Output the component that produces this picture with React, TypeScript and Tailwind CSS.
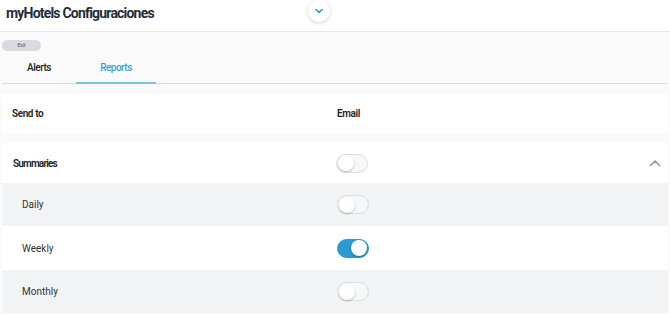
import { useState } from "react";

const Toggle = ({ on }: { on: boolean }) => (
	<div
		className={`w-[32px] h-[19px] rounded-full border flex items-center p-[1px] ${
			on ? "bg-[#2a9ad2] border-[#2a9ad2] justify-end" : "bg-[#f6f7f9] border-[#dcdee3] justify-start"
		}`}
	>
		<div className="w-[16px] h-[16px] rounded-full bg-white shadow-[0_1px_2px_rgba(0,0,0,0.25)]" />
	</div>
);

const Row = ({ label, on, shaded, tall }: { label: string; on: boolean; shaded: boolean; tall?: boolean }) => (
	<div className={`flex items-center ${tall ? "h-[44px]" : "h-[43px]"} ${shaded ? "bg-[#f2f3f5]" : "bg-white"}`}>
		<div className="w-[335px] pl-[20px] text-[10px] text-[#333]">{label}</div>
		<Toggle on={on} />
	</div>
);

const App = () => {
	const [tab] = useState("Reports");

	return (
		<div className="w-[670px] h-[314px] bg-[#fafafa] overflow-hidden" style={{ fontFamily: "Roboto, sans-serif" }}>
			<header className="h-[32px] bg-white border-b border-[#e6e6e6] flex items-center relative">
				<h1 className="pl-[6px] text-[14px] font-bold tracking-[-0.8px] text-[#1f2d3a] leading-none -mt-[6px]">myHotels Configuraciones</h1>
				<button className="absolute left-[308px] top-[0px] w-[22px] h-[22px] rounded-full bg-white shadow-[0_1px_4px_rgba(0,0,0,0.18)] flex items-center justify-center">
					<svg width="8" height="6" viewBox="0 0 8 6" fill="none">
						<path d="M1 1.5 L4 4.5 L7 1.5" stroke="#2a9ad2" strokeWidth="1.6" strokeLinecap="round" strokeLinejoin="round" />
					</svg>
				</button>
			</header>

			<div className="px-[2px]">
				<div className="pt-[8px]">
					<button className="w-[39px] h-[11px] rounded-full bg-[#d8dae0] text-[5px] text-[#555] flex items-center justify-center">Exit</button>
				</div>

				<nav className="flex border-b border-[#d9dce1] h-[33px]">
					{["Alerts", "Reports"].map((t) => (
						<div
							key={t}
							className={`flex items-center justify-center pt-[1px] text-[10px] font-medium tracking-[-0.5px] ${
								t === "Alerts" ? "w-[74px]" : "w-[80px]"
							} ${tab === t ? "text-[#3aa0d2] border-b-2 border-[#7dc1e2] -mb-[1px]" : "text-[#222]"}`}
						>
							{t}
						</div>
					))}
				</nav>

				<div className="mt-[10px] bg-white h-[39px] flex items-center">
					<div className="w-[335px] pl-[10px] text-[10px] font-semibold tracking-[-0.4px] text-[#222]">Send to</div>
					<div className="text-[10px] font-semibold tracking-[-0.4px] text-[#222]">Email</div>
				</div>

				<div className="mt-[10px] bg-white h-[40px] flex items-center">
					<div className="w-[334px] pl-[11px] text-[10px] font-semibold tracking-[-0.8px] text-[#222]">Summaries</div>
					<Toggle on={false} />
					<div className="ml-auto pr-[7px]">
						<svg width="12" height="8" viewBox="0 0 12 8" fill="none">
							<path d="M1.5 6.5 L6 2 L10.5 6.5" stroke="#8a96a3" strokeWidth="1.6" strokeLinecap="round" strokeLinejoin="round" />
						</svg>
					</div>
				</div>

				<Row label="Daily" on={false} shaded />
				<Row label="Weekly" on={true} shaded={false} tall />
				<Row label="Monthly" on={false} shaded />
			</div>
		</div>
	);
};

export default App;
